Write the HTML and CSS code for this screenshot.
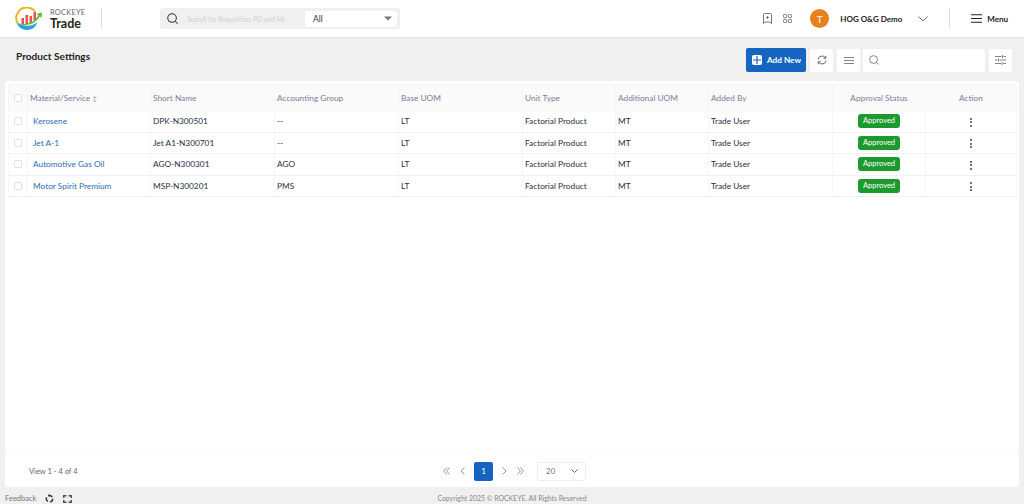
FILE: index.html
```html
<!DOCTYPE html>
<html lang="en">
<head>
    <meta charset="UTF-8">
    <title>Product Settings</title>
    <link rel="stylesheet" href="styles.css">
</head>
<body>
    <header class="topbar">
        <div class="brand">
            <svg class="brand-logo" width="28" height="24" viewBox="0 0 28 24">
                <path d="M2.500 16 A10.500 10.500 0 0 1 20 4.500" fill="none" stroke="#f4b41e" stroke-width="2"/>
                <path d="M2 15.500 C3 21 8 23 12 23 C17 23 21 20 22.500 15 C18 19 10 20.500 2 15.500Z" fill="#2aa3dc"/>
                <rect x="6.500" y="11" width="2.500" height="6" fill="#e2564c"/>
                <rect x="10.500" y="8" width="2.500" height="9" fill="#e2564c"/>
                <rect x="14.500" y="9" width="2.500" height="7" fill="#e2564c"/>
                <rect x="18.500" y="5" width="2.500" height="8" fill="#e2564c"/>
                <path d="M2 16 C11 19 19 15 23.500 8.500 L21.500 7 L27 5.500 L26.500 11 L25 9.500 C20 17 11 20.500 2 16Z" fill="#6cb52d"/>
            </svg>
            <div class="brand-text">
                <span class="brand-top">ROCKEYE</span>
                <span class="brand-name">Trade</span>
            </div>
        </div>
        <div class="global-search">
            <svg class="icon" width="11" height="11" viewBox="0 0 12 12"><circle cx="5.500" cy="5.500" r="4.700" fill="none" stroke="#333" stroke-width="1.100"/><path d="M9 9l2.500 2.500" stroke="#333" stroke-width="1.100"/></svg>
            <span class="global-placeholder">Search for Requisition, PO and Mc</span>
            <div class="global-select">
                <span>All</span>
                <svg width="8" height="5" viewBox="0 0 8 5"><path d="M0 .5h8L4 4.500z" fill="#777"/></svg>
            </div>
        </div>
        <div class="top-right">
            <svg class="bookmark" width="9" height="11" viewBox="0 0 9 11"><path d="M1.500 .5h6a1 1 0 0 1 1 1v9L6.500 9h-4L.5 10.500v-9a1 1 0 0 1 1-1z" fill="none" stroke="#666" stroke-width=".9"/><path d="M4.500 3v3M3 4.500h3" stroke="#666" stroke-width=".8"/></svg>
            <svg class="apps" width="9" height="9" viewBox="0 0 10 10"><g fill="none" stroke="#666" stroke-width="1"><rect x=".5" y=".5" width="3.500" height="3.500" rx="1"/><rect x="6" y=".5" width="3.500" height="3.500" rx="1"/><rect x=".5" y="6" width="3.500" height="3.500" rx="1"/><rect x="6" y="6" width="3.500" height="3.500" rx="1"/></g></svg>
            <div class="avatar">T</div>
            <span class="user-name">HOG O&amp;G Demo</span>
            <svg class="user-caret" width="10" height="6" viewBox="0 0 10 6"><path d="M.5.500L5 5 9.500.5" fill="none" stroke="#555" stroke-width=".9"/></svg>
            <div class="menu-btn">
                <svg width="11" height="9" viewBox="0 0 11 9"><path d="M0 .75h11M0 4.500h11M0 8.250h11" stroke="#222" stroke-width="1.100"/></svg>
                <span>Menu</span>
            </div>
        </div>
    </header>

    <main class="page">
        <div class="page-head">
            <h1>Product Settings</h1>
            <div class="tools">
                <button class="add-btn">
                    <span class="plus"><svg width="8" height="8" viewBox="0 0 8 8"><path d="M4 0v8M0 4h8" stroke="#1565c0" stroke-width="1.200"/></svg></span>
                    Add New
                </button>
                <div class="tool">
                    <svg width="10" height="10" viewBox="0 0 10 10"><path d="M1 4.500A4 4 0 0 1 8.300 2.800M9 5.500A4 4 0 0 1 1.700 7.200" fill="none" stroke="#555" stroke-width=".9"/><path d="M8.800 .8v2.400H6.500M1.200 9.200V6.800h2.300" fill="none" stroke="#555" stroke-width=".9"/></svg>
                </div>
                <div class="tool">
                    <svg width="10" height="7" viewBox="0 0 10 7"><path d="M0 .5h10M0 3.500h10M0 6.500h10" stroke="#666" stroke-width=".8"/></svg>
                </div>
                <div class="tool-search">
                    <svg width="10" height="10" viewBox="0 0 11 11"><circle cx="5" cy="5" r="4.300" fill="none" stroke="#777" stroke-width="1"/><path d="M8 8l2.500 2.500" stroke="#777" stroke-width="1"/></svg>
                </div>
                <div class="tool filter">
                    <svg width="11" height="10" viewBox="0 0 11 10"><path d="M0 1.500h6.500M8.500 1.500H11M0 5h2.500M4.500 5H11M0 8.500h6M8 8.500h3M7.500 0v3M3.500 3.500v3M7 7v3" stroke="#666" stroke-width=".8"/></svg>
                </div>
            </div>
        </div>

        <section class="card">
            <div class="table-wrap">
                <table class="grid">
                    <colgroup>
                        <col class="c-check"><col class="c-first"><col class="c-wide"><col class="c-wide"><col class="c-wide">
                        <col class="c-mid"><col class="c-mid"><col class="c-wide"><col class="c-mid"><col class="c-action">
                    </colgroup>
                    <thead>
                        <tr>
                            <th><span class="check"></span></th>
                            <th>Material/Service <span class="sort">&#8597;</span></th>
                            <th>Short Name</th>
                            <th>Accounting Group</th>
                            <th>Base UOM</th>
                            <th>Unit Type</th>
                            <th>Additional UOM</th>
                            <th>Added By</th>
                            <th class="center">Approval Status</th>
                            <th class="center">Action</th>
                        </tr>
                    </thead>
                    <tbody>
                        <tr>
                            <td><span class="check"></span></td>
                            <td class="name"><a>Kerosene</a></td>
                            <td>DPK-N300501</td>
                            <td>--</td>
                            <td>LT</td>
                            <td>Factorial Product</td>
                            <td>MT</td>
                            <td>Trade User</td>
                            <td class="center"><span class="badge">Approved</span></td>
                            <td class="center"><span class="dots"><i></i><i></i><i></i></span></td>
                        </tr>
                        <tr>
                            <td><span class="check"></span></td>
                            <td class="name"><a>Jet A-1</a></td>
                            <td>Jet A1-N300701</td>
                            <td>--</td>
                            <td>LT</td>
                            <td>Factorial Product</td>
                            <td>MT</td>
                            <td>Trade User</td>
                            <td class="center"><span class="badge">Approved</span></td>
                            <td class="center"><span class="dots"><i></i><i></i><i></i></span></td>
                        </tr>
                        <tr>
                            <td><span class="check"></span></td>
                            <td class="name"><a>Automotive Gas Oil</a></td>
                            <td>AGO-N300301</td>
                            <td>AGO</td>
                            <td>LT</td>
                            <td>Factorial Product</td>
                            <td>MT</td>
                            <td>Trade User</td>
                            <td class="center"><span class="badge">Approved</span></td>
                            <td class="center"><span class="dots"><i></i><i></i><i></i></span></td>
                        </tr>
                        <tr>
                            <td><span class="check"></span></td>
                            <td class="name"><a>Motor Spirit Premium</a></td>
                            <td>MSP-N300201</td>
                            <td>PMS</td>
                            <td>LT</td>
                            <td>Factorial Product</td>
                            <td>MT</td>
                            <td>Trade User</td>
                            <td class="center"><span class="badge">Approved</span></td>
                            <td class="center"><span class="dots"><i></i><i></i><i></i></span></td>
                        </tr>
                    </tbody>
                </table>
            </div>
            <div class="pager">
                <span class="view-count">View 1 - 4 of 4</span>
                <div class="pages">
                    <svg width="7" height="8" viewBox="0 0 7 8"><path d="M3.500.5L.6 4l2.900 3.500M6.500.5L3.600 4l2.900 3.500" fill="none" stroke="#999" stroke-width="1"/></svg>
                    <svg class="prev" width="5" height="8" viewBox="0 0 5 8"><path d="M4.500.5L1 4l3.500 3.500" fill="none" stroke="#999" stroke-width="1"/></svg>
                    <span class="page-num">1</span>
                    <svg class="next" width="5" height="8" viewBox="0 0 5 8"><path d="M.5.500L4 4 .5 7.500" fill="none" stroke="#999" stroke-width="1"/></svg>
                    <svg width="7" height="8" viewBox="0 0 7 8"><path d="M.5.500L3.400 4 .5 7.500M3.500.5L6.400 4 3.500 7.500" fill="none" stroke="#999" stroke-width="1"/></svg>
                </div>
                <div class="page-size">
                    <span>20</span>
                    <svg width="7" height="4" viewBox="0 0 7 4"><path d="M.5.500L3.500 3.500 6.500.5" fill="none" stroke="#555" stroke-width=".9"/></svg>
                </div>
            </div>
        </section>
    </main>

    <footer class="bottom">
        <div class="bottom-left">
            <span>Feedback</span>
            <svg class="recycle" width="9" height="9" viewBox="0 0 9 9"><circle cx="4.500" cy="4.700" r="3.200" fill="none" stroke="#333" stroke-width="1.500" stroke-dasharray="4.500 2.200"/><path d="M3.500 0l2.500 1.500L4 3z" fill="#333"/></svg>
            <svg width="9" height="8" viewBox="0 0 9 8"><g fill="#555"><path d="M0 0h3.500v1.500H1.500v1.500H0z"/><path d="M5.500 0H9v3H7.500V1.500h-2z"/><path d="M0 5h1.500v1.500h2V8H0z"/><path d="M7.500 5H9v3H5.500V6.500h2z"/></g></svg>
        </div>
        <span class="copyright">Copyright 2025 &copy; ROCKEYE. All Rights Reserved</span>
    </footer>
</body>
</html>
```

FILE: styles.css
```css
* {
    box-sizing: border-box;
}
body {
    font-family: "Lato", "Open Sans", sans-serif;
    margin: 0;
    height: 100vh;
    overflow: hidden;
    display: flex;
    flex-direction: column;
    background-color: #f0f0f0;
    color: #222;
}

/* top bar */
.topbar {
    height: 37px;
    flex-shrink: 0;
    background-color: #fff;
    display: flex;
    align-items: center;
    box-shadow: 0 1px 2px rgba(0, 0, 0, 0.05);
}
.brand {
    width: 87px;
    height: 21px;
    margin-left: 15px;
    border-right: 1px solid #ddd;
    display: flex;
    align-items: center;
    gap: 7px;
}
.brand-text {
    display: flex;
    flex-direction: column;
    line-height: 10px;
}
.brand-top {
    font-size: 7.500px;
    color: #666;
    letter-spacing: 0.2px;
}
.brand-name {
    font-size: 12.500px;
    font-weight: 700;
    color: #222;
    line-height: 12px;
}
.global-search {
    width: 240px;
    height: 21px;
    margin-left: 58px;
    padding: 0 3px 0 7px;
    background-color: #f0f0f0;
    border-radius: 3px;
    display: flex;
    align-items: center;
}
.global-placeholder {
    margin-left: 9px;
    width: 118px;
    font-size: 7px;
    font-style: italic;
    color: #d0d0d0;
    white-space: nowrap;
    overflow: hidden;
}
.global-select {
    flex-grow: 1;
    height: 16px;
    background-color: #fff;
    border-radius: 2px;
    padding: 0 5px 0 8px;
    display: flex;
    align-items: center;
    justify-content: space-between;
    font-size: 8.500px;
    color: #333;
}
.top-right {
    margin-left: auto;
    display: flex;
    align-items: center;
    height: 21px;
}
.apps {
    margin-left: 11px;
}
.avatar {
    width: 19px;
    height: 19px;
    margin-left: 18px;
    border-radius: 50%;
    background-color: #e8801e;
    color: #fff;
    font-size: 10px;
    display: flex;
    align-items: center;
    justify-content: center;
}
.user-name {
    margin-left: 11px;
    width: 78px;
    font-size: 8px;
    font-weight: 700;
    color: #222;
}
.menu-btn {
    height: 21px;
    margin-left: 21px;
    padding: 0 16px 0 21px;
    border-left: 1px solid #ddd;
    display: flex;
    align-items: center;
    gap: 5px;
    font-size: 8px;
    font-weight: 700;
}

/* content */
.page {
    flex-grow: 1;
    padding: 10px 5px 0;
    display: flex;
    flex-direction: column;
    min-height: 0;
}
.page-head {
    height: 34px;
    display: flex;
    justify-content: space-between;
    align-items: flex-start;
    padding: 1px 7px 0 11px;
}
.page-head h1 {
    margin: 1px 0 0;
    font-size: 10.100px;
    font-weight: 700;
    color: #222;
    line-height: 14px;
}
.tools {
    display: flex;
    align-items: center;
    gap: 4px;
}
.add-btn {
    width: 60px;
    height: 24px;
    padding: 0 0 0 6px;
    border: none;
    border-radius: 2px;
    background-color: #1565c0;
    color: #fff;
    font-family: inherit;
    font-size: 8.200px;
    font-weight: 700;
    display: flex;
    align-items: center;
    gap: 5px;
}
.plus {
    width: 10px;
    height: 10px;
    background-color: #fff;
    border-radius: 2px;
    display: flex;
    align-items: center;
    justify-content: center;
}
.tool {
    width: 23px;
    height: 23px;
    background-color: #fff;
    border-radius: 2px;
    display: flex;
    align-items: center;
    justify-content: center;
}
.tool-search {
    width: 122px;
    height: 23px;
    margin-left: -1px;
    background-color: #fff;
    border-radius: 2px;
    padding-left: 6px;
    display: flex;
    align-items: center;
}

/* card and table */
.card {
    flex-grow: 1;
    min-height: 0;
    background-color: #fff;
    border-radius: 3px 3px 0 0;
    display: flex;
    flex-direction: column;
}
.table-wrap {
    flex-grow: 1;
    padding: 3px 3px 0;
    box-shadow: inset 0 -8px 8px -8px rgba(0, 0, 0, 0.04);
}
.grid {
    width: 100%;
    border-collapse: collapse;
    table-layout: fixed;
    font-size: 8.300px;
}
.c-check {
    width: 19px;
}
.c-first {
    width: 123px;
}
.c-wide {
    width: 124px;
}
.c-mid {
    width: 93px;
}
.c-action {
    width: 91px;
}
.grid th {
    height: 26px;
    background-color: #fafafa;
    border: 1px solid #f5f5f5;
    padding: 0 2px;
    text-align: left;
    font-weight: 400;
    color: #7a7d9a;
}
.grid td {
    height: 21.500px;
    border-bottom: 1px solid #f0f0f0;
    border-right: 1px solid #f7f7f7;
    padding: 0 2px;
    color: #2a2f45;
    white-space: nowrap;
}
.grid td:first-child {
    border-left: 1px solid #f7f7f7;
}
.grid .center {
    text-align: center;
}
.grid .name {
    padding-left: 5px;
}
.grid .name a {
    color: #2d6cb5;
}
.check {
    display: block;
    width: 8px;
    height: 8px;
    margin: 0 auto;
    border: 1px solid #e2e2e2;
    border-radius: 1px;
    background-color: #fff;
}
.sort {
    font-size: 6px;
    color: #999;
}
.badge {
    display: inline-block;
    width: 42px;
    height: 14px;
    line-height: 14px;
    border-radius: 3px;
    background-color: #1c9a2e;
    color: #fff;
    font-size: 7.500px;
    text-align: center;
    vertical-align: middle;
}
.dots {
    display: inline-flex;
    flex-direction: column;
    gap: 1.500px;
    margin-top: 2px;
    vertical-align: middle;
}
.dots i {
    width: 2px;
    height: 2px;
    border-radius: 50%;
    background-color: #444;
}

/* pager */
.pager {
    height: 32px;
    flex-shrink: 0;
    display: flex;
    align-items: center;
    padding-left: 24px;
    font-size: 7.500px;
    color: #666;
}
.view-count {
    width: 414px;
}
.pages {
    display: flex;
    align-items: center;
}
.prev {
    margin-left: 10px;
}
.page-num {
    width: 19px;
    height: 19px;
    margin: 0 9px;
    border-radius: 2px;
    background-color: #1565c0;
    color: #fff;
    font-size: 8px;
    display: flex;
    align-items: center;
    justify-content: center;
}
.next {
    margin-right: 10px;
}
.page-size {
    width: 49px;
    height: 19px;
    margin-left: 13px;
    padding: 0 7px 0 8px;
    border: 1px solid #eee;
    border-radius: 3px;
    display: flex;
    align-items: center;
    justify-content: space-between;
    font-size: 8px;
    color: #777;
}

/* footer */
.bottom {
    height: 17px;
    flex-shrink: 0;
    padding-top: 5px;
    display: flex;
    align-items: center;
    justify-content: center;
    font-size: 7.500px;
    color: #777;
}
.bottom-left {
    position: absolute;
    left: 5px;
    bottom: 1px;
    display: flex;
    align-items: center;
    gap: 9px;
}
.copyright {
    font-size: 6.900px;
    color: #888;
}
```
